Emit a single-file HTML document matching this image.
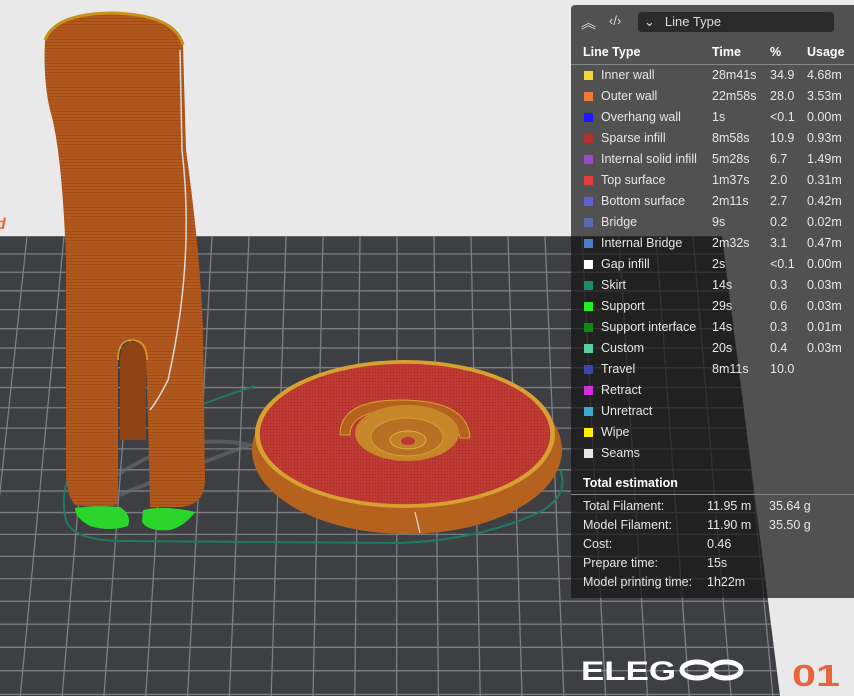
<!DOCTYPE html>
<html><head><meta charset="utf-8"><style>
html,body{margin:0;padding:0;width:854px;height:696px;overflow:hidden;background:#e9e9e9;font-family:"Liberation Sans",sans-serif}
svg{position:absolute;left:0;top:0}
.panel{position:absolute;left:571px;top:5px;width:283px;height:593px;background:rgba(22,22,22,0.72);border-radius:4px 0 0 0;color:#e6e6e6;font-size:12.5px}
.row{position:absolute;left:0;height:18px;line-height:18px;white-space:nowrap}
.row span{position:absolute}
.sw{width:9px;height:9px;top:4.5px;left:13px}
.hd{font-weight:bold;color:#fff}
</style></head><body>
<svg width="854" height="696" viewBox="0 0 854 696">
<defs>
<pattern id="hatch" width="4" height="3" patternUnits="userSpaceOnUse"><rect width="4" height="3" fill="#b3591e"/><rect width="4" height="1" fill="#a24e18"/></pattern>
<pattern id="redp" width="3" height="3" patternUnits="userSpaceOnUse"><rect width="3" height="3" fill="#bf3a33"/><rect width="1" height="1" fill="#a02a2a"/></pattern>
<clipPath id="bed"><polygon points="0,236 722,236 780,696 0,696"/></clipPath>
</defs>
<polygon points="0,236 722,236 780,696 0,696" fill="#3e3f42"/>
<g stroke="#7c7f84" stroke-width="1.3" id="grid" clip-path="url(#bed)"></g>
<text x="-4" y="229" fill="#e8643a" font-size="16" font-weight="bold" font-style="italic" font-family="Liberation Sans">d</text>
<!-- skirt -->
<path d="M70,470 Q60,500 66,520 Q72,540 120,541 L400,543 Q480,540 540,512 Q570,495 560,470 M255,386 Q180,410 150,430" fill="none" stroke="#1f7a62" stroke-width="2"/>
<path d="M110,480 Q180,430 250,445 Q180,470 120,495" fill="none" stroke="#6a6c70" stroke-width="4" opacity=".6"/>
<!-- tube -->
<path d="M45,40 Q55,14 110,13 Q175,14 183,45 L186,150 Q200,250 203,330 L205,480 Q205,505 180,507 L150,507 L148,420 L146,360 Q140,340 130,340 Q118,340 118,360 L118,505 Q100,508 75,505 Q66,495 66,470 L66,260 Q62,150 50,110 Q43,80 45,40 Z" fill="url(#hatch)"/>
<path d="M45,40 Q55,14 110,13 Q175,14 183,45" fill="none" stroke="#c9921c" stroke-width="3"/>
<path d="M180,50 L182,150 Q195,260 168,380 Q158,400 150,410" fill="none" stroke="#d9d9d9" stroke-width="1.5"/>
<path d="M120,360 Q120,342 132,342 Q145,342 146,360 L146,440 L120,440 Z" fill="#8f4314"/>
<path d="M118,360 Q118,340 132,340 Q147,340 147,360" fill="none" stroke="#d8a030" stroke-width="1.5"/>
<!-- supports -->
<path d="M75,508 Q95,505 120,507 Q132,515 128,526 Q110,532 90,526 Q75,518 75,508Z" fill="#2bd62b"/>
<path d="M143,510 Q165,505 195,512 Q185,526 170,530 Q148,532 142,522Z" fill="#2bd62b"/>
<!-- disc -->
<ellipse cx="407" cy="450" rx="155" ry="84" fill="#b5621f"/>
<ellipse cx="405" cy="434" rx="150" ry="74" fill="#d8a030"/>
<ellipse cx="405" cy="434" rx="146" ry="71" fill="url(#redp)"/>
<ellipse cx="405" cy="434" rx="146" ry="71" fill="none" stroke="#d8a030" stroke-width="1.5"/>
<path d="M340,435 Q340,400 400,400 Q468,400 470,438 L460,438 Q455,410 400,410 Q350,410 350,435Z" fill="#b5621f" stroke="#d8a030"/>
<ellipse cx="407" cy="433" rx="52" ry="28" fill="#c6862a"/>
<ellipse cx="407" cy="437" rx="36" ry="19" fill="#b87024" stroke="#d8a030"/>
<ellipse cx="408" cy="440" rx="18" ry="9" fill="#c08028" stroke="#e0b040"/>
<ellipse cx="408" cy="441" rx="7" ry="4" fill="#c03535"/>
<path d="M415,512 L420,533" stroke="#ddd" stroke-width="1.2"/>
<!-- logo -->
<text x="581" y="680" fill="#fff" font-size="27" font-weight="bold" font-family="Liberation Sans" textLength="95" lengthAdjust="spacingAndGlyphs">ELEG</text>
<g fill="none" stroke="#fff" stroke-width="5"><ellipse cx="697" cy="670" rx="15" ry="8"/><ellipse cx="726" cy="670" rx="15" ry="8"/></g>
<text x="792" y="686" fill="#e8643a" font-size="31" font-weight="bold" font-family="Liberation Sans" textLength="48" lengthAdjust="spacingAndGlyphs">01</text>
</svg>
<div class="panel">
<div style="position:absolute;left:10px;top:7px;font-size:15px;color:#ddd">︽</div>
<div style="position:absolute;left:38px;top:8px;font-size:13px;color:#ddd">‹/›</div>
<div style="position:absolute;left:67px;top:7px;width:196px;height:20px;background:#2a2a2a;border-radius:3px;font-size:13px;line-height:20px;color:#ddd"><span style="margin-left:6px">⌄</span><span style="margin-left:10px">Line Type</span></div>
<div id="rows"></div>
<div style="position:absolute;left:0;top:59px;width:283px;height:1px;background:#888"></div>
<div style="position:absolute;left:0;top:489px;width:283px;height:1px;background:#888"></div>
</div>
<script>
var g=document.getElementById('grid'),s='';
var y=236,d=18;while(y<700){s+='<line x1="0" y1="'+y+'" x2="790" y2="'+y+'"/>';y+=d;d+=0.27;}
for(var x=27-37*3;x<760;x+=37){var xb=400+(x-400)*1.13;s+='<line x1="'+x+'" y1="236" x2="'+xb+'" y2="696"/>';}
g.innerHTML=s;
var R=[["#f5d63a","Inner wall","28m41s","34.9","4.68m"],["#ee7a3a","Outer wall","22m58s","28.0","3.53m"],["#1a1aff","Overhang wall","1s","<0.1","0.00m"],["#b03030","Sparse infill","8m58s","10.9","0.93m"],["#9a4ac8","Internal solid infill","5m28s","6.7","1.49m"],["#e04040","Top surface","1m37s","2.0","0.31m"],["#6060d0","Bottom surface","2m11s","2.7","0.42m"],["#5a6ab0","Bridge","9s","0.2","0.02m"],["#4a7ac8","Internal Bridge","2m32s","3.1","0.47m"],["#ffffff","Gap infill","2s","<0.1","0.00m"],["#1a8a6a","Skirt","14s","0.3","0.03m"],["#22ee22","Support","29s","0.6","0.03m"],["#128a12","Support interface","14s","0.3","0.01m"],["#5ad0a0","Custom","20s","0.4","0.03m"],["#3a48a8","Travel","8m11s","10.0",""],["#d030e0","Retract","","",""],["#40a8d0","Unretract","","",""],["#ffee00","Wipe","","",""],["#e6e6e6","Seams","","",""]];
var h='<div class="row hd" style="top:38px"><span style="left:12px">Line Type</span><span style="left:141px">Time</span><span style="left:199px">%</span><span style="left:236px">Usage</span></div>';
R.forEach(function(r,i){var t=61+i*21;h+='<div class="row" style="top:'+t+'px"><span class="sw" style="background:'+r[0]+'"></span><span style="left:30px">'+r[1]+'</span><span style="left:141px">'+r[2]+'</span><span style="left:199px">'+r[3]+'</span><span style="left:236px">'+r[4]+'</span></div>';});
h+='<div class="row hd" style="top:469px"><span style="left:12px">Total estimation</span></div>';
var T=[["Total Filament:","11.95 m","35.64 g"],["Model Filament:","11.90 m","35.50 g"],["Cost:","0.46",""],["Prepare time:","15s",""],["Model printing time:","1h22m",""]];
T.forEach(function(r,i){var t=492+i*19;h+='<div class="row" style="top:'+t+'px"><span style="left:12px">'+r[0]+'</span><span style="left:136px">'+r[1]+'</span><span style="left:198px">'+r[2]+'</span></div>';});
document.getElementById('rows').innerHTML=h;
</script>
</body></html>
